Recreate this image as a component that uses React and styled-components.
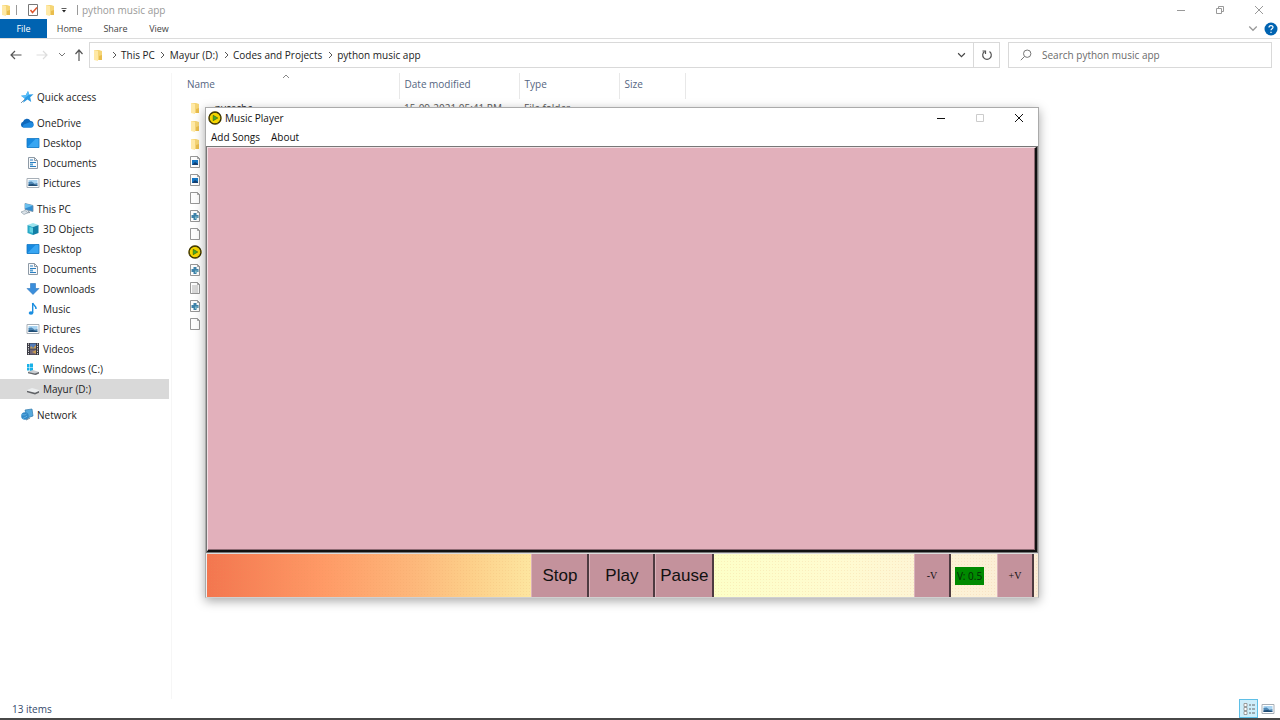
import React from "react";
import styled, { createGlobalStyle } from "styled-components";

const GlobalStyle = createGlobalStyle`
  * { box-sizing: border-box; }
  body {
    margin: 0;
    background: #fff;
    color: #222;
    font: 10px/20px "Open Sans", "Noto Sans", sans-serif;
  }
  button, input { font: inherit; color: inherit; }
  button { border: 0; padding: 0; background: none; }
  svg { display: block; flex: none; }
`;

const Page = styled.div`
  position: relative;
  display: flex;
  flex-direction: column;
  min-height: 100vh;
  border-bottom: 2px solid #484848;
`;

/* Title bar and ribbon */
const TitleBar = styled.header`
  display: flex;
  align-items: center;
  height: 19px;
  padding-right: 2px;
  color: #999;
`;
const QuickTools = styled.div`
  display: flex;
  align-items: center;
  flex: 1;
`;
const ToolButton = styled.button`
  display: flex;
  align-items: center;
  justify-content: center;
  width: ${(p) => p.$w || 16}px;
  height: 18px;
`;
const Rule = styled.span`
  width: 1px;
  height: 10px;
  margin: 0 4px;
  background: #999;
`;
const CaptionButtons = styled.div`
  display: flex;
`;
const CaptionButton = styled.button`
  display: flex;
  align-items: center;
  justify-content: center;
  width: 39px;
  height: 19px;
  color: ${(p) => p.$color || "#999"};
`;
const Ribbon = styled.nav`
  display: flex;
  align-items: center;
  height: 20px;
  padding-right: 2px;
  border-bottom: 1px solid #dcdcdc;
  font-size: 9px;
`;
const RibbonTab = styled.button`
  width: ${(p) => p.$w}px;
  height: 19px;
  line-height: 19px;
  color: ${(p) => (p.$active ? "#fff" : "#444")};
  background: ${(p) => (p.$active ? "#0063b1" : "none")};
`;
const Spacer = styled.span`
  flex: ${(p) => p.$grow || 1};
`;

/* Address bar */
const AddressRow = styled.div`
  display: flex;
  align-items: center;
  height: 34px;
  padding: 3px 8px 5px 4px;
`;
const NavButtons = styled.div`
  display: flex;
  width: 85px;
`;
const AddressBox = styled.div`
  display: flex;
  align-items: center;
  flex: 1;
  height: 26px;
  border: 1px solid #d9d9d9;
  padding-left: 2px;
`;
const Crumbs = styled.div`
  display: flex;
  align-items: center;
  flex: 1;
  padding-left: 2px;
`;
const Crumb = styled.a`
  display: flex;
  align-items: center;
  color: #222;
  text-decoration: none;
`;
const CrumbArrow = styled.span`
  display: flex;
  justify-content: center;
  width: 15px;
`;
const RefreshButton = styled.button`
  display: flex;
  align-items: center;
  justify-content: center;
  width: 26px;
  height: 24px;
  border-left: 1px solid #d9d9d9;
`;
const SearchBox = styled.label`
  display: flex;
  align-items: center;
  gap: 10px;
  width: 264px;
  height: 26px;
  margin-left: 8px;
  padding-left: 11px;
  border: 1px solid #d9d9d9;
`;
const SearchInput = styled.input`
  flex: 1;
  min-width: 0;
  border: 0;
  padding: 0;
  outline: 0;
  background: none;
  &::placeholder { color: #6b6b6b; opacity: 1; }
`;

/* Body */
const Body = styled.main`
  display: flex;
  flex: 1;
`;
const Sidebar = styled.aside`
  display: flex;
  flex-direction: column;
  gap: 6px;
  width: 172px;
  padding: 14px 2px 0 0;
  border-right: 1px solid #f6f6f6;
`;
const NavGroup = styled.div`
  display: flex;
  flex-direction: column;
`;
const NavItem = styled.a`
  display: flex;
  align-items: center;
  gap: 3px;
  height: 20px;
  padding-left: ${(p) => (p.$nested ? 26 : 20)}px;
  color: #222;
  text-decoration: none;
  background: ${(p) => (p.$selected ? "#d9d9d9" : "none")};
`;
const FileArea = styled.section`
  flex: 1;
  padding-left: 10px;
`;
const FileTable = styled.table`
  border-collapse: collapse;
  table-layout: fixed;
  width: 503px;
  text-align: left;
`;
const HeadCell = styled.th`
  position: relative;
  width: ${(p) => p.$w}px;
  height: 26px;
  padding: 0 0 4px 5px;
  border-right: 1px solid #e8e8e8;
  color: #55657f;
  font-weight: 400;
`;
const SortMark = styled.span`
  position: absolute;
  top: 0;
  left: 46%;
`;
const Row = styled.tr`
  height: 18px;
`;
const Cell = styled.td`
  height: 18px;
  padding: 0 0 0 5px;
  line-height: 18px;
  color: #5a5a5a;
`;
const FileName = styled.div`
  display: flex;
  align-items: center;
  gap: 4px;
  color: #222;
`;
const FileIcon = styled.span`
  display: flex;
  justify-content: center;
  width: 15px;
`;
const StatusBar = styled.footer`
  display: flex;
  align-items: center;
  height: 19px;
  padding: 0 3px 0 12px;
  color: #34486b;
`;
const ViewButton = styled.button`
  display: flex;
  align-items: center;
  justify-content: center;
  width: 19px;
  height: 19px;
  border: ${(p) => (p.$active ? "1px solid #5fbfe6" : "0")};
  background: ${(p) => (p.$active ? "#cdeefb" : "none")};
`;

/* Music player window */
const PlayerWindow = styled.section`
  position: absolute;
  top: 107px;
  right: 241px;
  bottom: 120px;
  left: 205px;
  display: flex;
  flex-direction: column;
  border: 1px solid #aaa;
  border-bottom-color: #d0d0d0;
  background: #fff;
  box-shadow: 0 3px 10px rgba(0, 0, 0, 0.35);
`;
const PlayerTitle = styled.header`
  display: flex;
  align-items: center;
  gap: 3px;
  height: 20px;
  padding-left: 2px;
  color: #111;
`;
const MenuBar = styled.nav`
  display: flex;
  gap: 11px;
  height: 18px;
  padding-left: 5px;
`;
const MenuButton = styled.button`
  height: 18px;
  line-height: 18px;
  color: #111;
  font-weight: 500;
`;
const SongList = styled.div`
  flex: 1;
  border-style: solid;
  border-width: 2px 3px 3px 2px;
  border-color: #f3dfe4 #111 #111 #f3dfe4;
  outline: 1px solid #777;
  outline-offset: -1px;
  background: #e2b0bb;
  box-shadow: inset -1px -1px 0 #8d6a73;
`;
const ControlBar = styled.div`
  display: flex;
  height: 44px;
  padding-right: 4px;
  border-top: 1px solid #ddd;
  border-left: 1px solid #eee;
  background:
    radial-gradient(circle, rgba(230, 150, 90, 0.14) 1px, transparent 1px) 0 0 / 3px 3px,
    linear-gradient(90deg, #f3764f 0%, #ff9a66 14%, #fdb87b 25%, #fdd08a 32%, #fde6a0 39%, #fbf8b8 52%, #fdffc8 62%, #fffbd0 76%, #fdf3d6 88%, #fbecd6 100%);
`;
const PlayButton = styled.button`
  width: ${(p) => p.$w}px;
  border-right: 2px solid #4d3a40;
  border-left: 1px solid #dbb2bb;
  background: #c4929c;
  color: #111;
  font: 17px/44px "Liberation Sans", Arial, sans-serif;
`;
const VolumeButton = styled(PlayButton)`
  font: 10px/44px "Liberation Serif", "Times New Roman", serif;
`;
const VolumeBox = styled.div`
  width: 46px;
  padding: 13px 0 0 4px;
`;
const VolumeLabel = styled.output`
  display: block;
  width: 29px;
  height: 18px;
  background: #008a00;
  color: #062b06;
  line-height: 18px;
  text-align: center;
`;

const Svg = ({ w = 14, h = 14, children }) => (
  <svg width={w} height={h} viewBox={`0 0 ${w} ${h}`} fill="none" aria-hidden="true">
    {children}
  </svg>
);

const Folder = () => (
  <Svg w={12} h={14}>
    <path d="M2 2h5l3 1v9H2z" fill="#f5d576" />
    <path d="M2 2l4 1v10l-4-1z" fill="#ffe9a6" />
    <path d="M7 8l3-1v5H7z" fill="#e9bd4d" />
  </Svg>
);
const Chevron = ({ dir = "right", color = "#555", size = 8 }) => {
  const d = { right: "M3 1l3 3-3 3", down: "M1 2l3 3 3-3", up: "M1 5l3-3 3 3" }[dir];
  return (
    <svg width={size} height={size} viewBox="0 0 8 8" fill="none" aria-hidden="true">
      <path d={d} stroke={color} strokeWidth="1" />
    </svg>
  );
};
const Arrow = ({ dir, color = "#555" }) => (
  <Svg w={12} h={12}>
    <path
      d={{ left: "M11.500 6H1M5 2L1 6l4 4", right: "M.5 6H11M7 2l4 4-4 4", up: "M6 12V1M2.500 5L6 1l3.500 4" }[dir]}
      stroke={color}
      strokeWidth="1.2"
    />
  </Svg>
);
const Close = () => (
  <Svg w={10} h={10}><path d="M1 1l8 8M9 1L1 9" stroke="currentColor" /></Svg>
);
const Minimise = () => (
  <Svg w={10} h={10}><path d="M1 5.500h8" stroke="currentColor" /></Svg>
);
const Restore = () => (
  <Svg w={10} h={10}><path d="M1.500 3.500h5v5h-5zM3.500 3.500v-2h5v5h-2" stroke="currentColor" /></Svg>
);
const Maximise = () => (
  <Svg w={10} h={10}><path d="M1.500 1.500h7v7h-7z" stroke="currentColor" /></Svg>
);
const PlayerLogo = () => (
  <Svg>
    <circle cx="7" cy="7" r="6" fill="#f4d500" stroke="#2f2a08" strokeWidth="1.4" />
    <circle cx="7" cy="7" r="6.300" stroke="#b89a00" strokeWidth=".7" strokeDasharray="1.300 2" />
    <path d="M5.200 4.300L9.800 7 5.200 9.700z" fill="#3fae2a" stroke="#3b5d10" strokeWidth=".6" />
  </Svg>
);

const Monitor = () => (
  <Svg>
    <path d="M1 2.500h12v9H1z" fill="#1689e0" />
    <path d="M1 11.500L10 2.500h3v9z" fill="#38a6f2" />
    <path d="M1 2.500h12v9H1z" stroke="#1478c4" strokeWidth=".8" />
  </Svg>
);
const Documents = () => (
  <Svg>
    <path d="M2.500 1.500h6l3 3v8h-9z" fill="#f7f9fb" stroke="#8e9aa6" />
    <path d="M4 4h3M4 6.500h6M4 10.500h6" stroke="#2b7fc0" />
    <path d="M4 7.500h3v2H4z" fill="#5aa3d4" />
    <path d="M8.500 1.500v3h3" stroke="#8e9aa6" />
  </Svg>
);
const Pictures = () => (
  <Svg>
    <path d="M1 2.500h12v9H1z" fill="#fff" stroke="#a7afb7" />
    <path d="M2.500 4h9v3h-9z" fill="#a9d4f2" />
    <path d="M2.500 6l3-.5 3 2 3-.5v3h-9z" fill="#4d86b4" />
    <path d="M2.500 8.500l4-.5 5 1.500v.500h-9z" fill="#1f4c74" />
  </Svg>
);
const NAV_ICONS = {
  star: (
    <Svg>
      <path d="M8 1l1.200 3.600 4.300-.3-3.300 3 1 4.700L7.500 9.500 3 12.800l1.500-4.500L1 5.800l4.700-.6z" fill="#2a9be6" />
      <path d="M8 1l1.200 3.600L4.500 8.300 1 5.800l4.700-.6z" fill="#58bdf7" />
      <path d="M1 13l4-4" stroke="#7b98b0" />
    </Svg>
  ),
  cloud: (
    <Svg>
      <path d="M3 11.500a3 3 0 0 1 0-5.700A4 4 0 0 1 10.500 5 3.300 3.300 0 0 1 11 11.500z" fill="#0f68bb" />
      <path d="M3.500 11.500c-1.500-1.500 0-3 1.500-3.500l4-1.500c3-.8 4.500 1 4.500 2.700s-1 2.300-2.500 2.300z" fill="#1f8ae0" />
    </Svg>
  ),
  monitor: <Monitor />,
  documents: <Documents />,
  pictures: <Pictures />,
  pc: (
    <Svg>
      <path d="M5 1.500l8 2v6l-8-2z" fill="#318fd3" stroke="#6e8ca5" strokeWidth=".8" />
      <path d="M5 1.500l8 2-8 3z" fill="#6bc0ef" />
      <path d="M8 9l2 1.500L5 11" stroke="#8d9aa5" />
      <path d="M1 10l4-1.500 3 2L4 12.500z" fill="#dde4ea" stroke="#91a0ac" strokeWidth=".7" />
    </Svg>
  ),
  cube: (
    <Svg>
      <path d="M1.500 3L7 1l5.500 2L7 5z" fill="#9ce4ee" />
      <path d="M1.500 3L7 5v8l-5.500-2z" fill="#29a9c7" />
      <path d="M12.500 3L7 5v8l5.500-2z" fill="#127fa6" />
      <path d="M3.500 5L7 6v5l-3.500-1z" fill="#63d2e2" />
    </Svg>
  ),
  download: (
    <Svg><path d="M4.500 1.500h5v5H13l-6 6-6-6h3.500z" fill="#3b8edb" stroke="#2d77bd" strokeWidth=".6" /></Svg>
  ),
  music: (
    <Svg>
      <path d="M6.500 1c.5 2.500 4 2.500 3.500 6" stroke="#1b8ee0" strokeWidth="1.500" />
      <path d="M6.700 1v10" stroke="#1b8ee0" strokeWidth="1.400" />
      <ellipse cx="5" cy="11" rx="2.300" ry="1.800" fill="#1b8ee0" />
    </Svg>
  ),
  videos: (
    <Svg>
      <path d="M1 1h12v12H1z" fill="#3a3a43" />
      <path d="M4 1.500h6v5H4z" fill="#527bb8" />
      <path d="M4 7.500h6v5H4z" fill="#74677a" />
      <path d="M5 4l2 2 3-3v3.500H4zM6 10l4-2v4z" fill="#c79a51" />
      <path d="M2.500 1.500v11M11.500 1.500v11" stroke="#e6e6e6" strokeDasharray="1.200 1.200" />
    </Svg>
  ),
  windows: (
    <Svg>
      <path d="M1 2h2.500v3H1zM4 1.500h3V5H4zM1 5.500h2.500v3H1zM4 5.500h3V9H4z" fill="#19b1e8" />
      <path d="M2 9.500l5-1.500 6 2v1.500L10 13l-8-2z" fill="#c9cdd1" />
      <path d="M2 10l7 1.500 4-1.500v1.500L9.500 13 2 11.300z" fill="#66696d" />
    </Svg>
  ),
  drive: (
    <Svg>
      <path d="M1 8l5-2 7 2v2.500l-4 1.500-8-2z" fill="#eceeef" />
      <path d="M1 8.700l8 2 4-1.700v1.800L9 12.500l-8-2.300z" fill="#606266" />
    </Svg>
  ),
  network: (
    <Svg>
      <path d="M5 2l7-1 1 7-6 2z" fill="#56a9dc" stroke="#3178ab" strokeWidth=".7" />
      <circle cx="5" cy="8" r="3.800" fill="#3389c8" />
      <path d="M1.500 7c2-1 3 1 5-1M3 11c0-2 3-1 4-3" stroke="#5fb0e0" />
      <path d="M6 12l4-2" stroke="#66859b" />
    </Svg>
  ),
};

const Sheet = ({ children }) => (
  <Svg w={12} h={14}>
    <path d="M1.500 1.500h7l2 2v9h-9z" fill="#fdfdfd" stroke="#8b8b8b" strokeWidth=".9" />
    <path d="M8.500 1.500v2h2" stroke="#8b8b8b" strokeWidth=".8" />
    {children}
  </Svg>
);
const FILE_ICONS = {
  folder: <Folder />,
  image: (
    <Sheet>
      <path d="M3 5h6v5H3z" fill="#1576c4" />
      <path d="M3 10l3-3 3 2v1z" fill="#123f74" />
    </Sheet>
  ),
  blank: <Sheet />,
  python: (
    <Sheet>
      <path d="M4.500 4h3v2H9.500v3h-2v2h-3V9h-2V6h2z" fill="#3f83aa" />
      <path d="M6 7.500h3v1H7.500V10H6z" fill="#7eb9c9" />
    </Sheet>
  ),
  player: <PlayerLogo />,
  text: (
    <Sheet><path d="M3 5h6M3 7h6M3 9h6M3 11h6" stroke="#aaa" strokeWidth=".9" /></Sheet>
  ),
};

const NAV_GROUPS = [
  [["star", "Quick access"]],
  [["cloud", "OneDrive"], ["monitor", "Desktop"], ["documents", "Documents"], ["pictures", "Pictures"]],
  [
    ["pc", "This PC"], ["cube", "3D Objects"], ["monitor", "Desktop"], ["documents", "Documents"],
    ["download", "Downloads"], ["music", "Music"], ["pictures", "Pictures"], ["videos", "Videos"],
    ["windows", "Windows (C:)"], ["drive", "Mayur (D:)"],
  ],
  [["network", "Network"]],
];
const FILES = [
  { icon: "folder", name: "__pycache__", date: "15-09-2021 05:41 PM", type: "File folder" },
  ...["folder", "folder", "image", "image", "blank", "python", "blank", "player", "python", "text", "python", "blank"].map(
    (icon) => ({ icon })
  ),
];
const CRUMBS = ["This PC", "Mayur (D:)", "Codes and Projects", "python music app"];

export default function App() {
  return (
    <Page>
      <GlobalStyle />
      <TitleBar>
        <QuickTools>
          <Folder />
          <Rule />
          <ToolButton $w={24} aria-label="Properties">
            <Svg w={12} h={12}>
              <path d="M1.500 .500h9v11h-9z" fill="#fff" stroke="#777" />
              <path d="M3.500 6l2 2.500L10 3.500" stroke="#e0572f" strokeWidth="1.500" />
            </Svg>
          </ToolButton>
          <ToolButton $w={10} aria-label="New folder"><Folder /></ToolButton>
          <ToolButton $w={18} aria-label="Customise toolbar">
            <Svg w={6} h={6}><path d="M0.500 1.500h5" stroke="#333" strokeWidth=".8" /><path d="M1 3h4L3 5.500z" fill="#222" /></Svg>
          </ToolButton>
          <Rule />
          python music app
        </QuickTools>
        <CaptionButtons>
          <CaptionButton aria-label="Minimise"><Minimise /></CaptionButton>
          <CaptionButton aria-label="Restore"><Restore /></CaptionButton>
          <CaptionButton aria-label="Close"><Close /></CaptionButton>
        </CaptionButtons>
      </TitleBar>
      <Ribbon>
        <RibbonTab $w={47} $active>File</RibbonTab>
        <RibbonTab $w={45}>Home</RibbonTab>
        <RibbonTab $w={47}>Share</RibbonTab>
        <RibbonTab $w={40}>View</RibbonTab>
        <Spacer />
        <ToolButton $w={22} aria-label="Expand ribbon"><Chevron dir="down" color="#999" size={10} /></ToolButton>
        <ToolButton $w={14} aria-label="Help">
          <Svg>
            <circle cx="7" cy="7" r="6.500" fill="#0063b1" />
            <path d="M5 5.500C5 3 9 3 9 5.300c0 1.500-2 1.500-2 3M7 9.700v1.200" stroke="#fff" strokeWidth="1.200" />
          </Svg>
        </ToolButton>
      </Ribbon>
      <AddressRow>
        <NavButtons>
          <ToolButton $w={24} aria-label="Back"><Arrow dir="left" /></ToolButton>
          <ToolButton $w={27} aria-label="Forward"><Arrow dir="right" color="#ddd" /></ToolButton>
          <ToolButton $w={14} aria-label="Recent"><Chevron dir="down" color="#777" /></ToolButton>
          <ToolButton $w={20} aria-label="Up"><Arrow dir="up" /></ToolButton>
        </NavButtons>
        <AddressBox>
          <Folder />
          <Crumbs>
            {CRUMBS.map((c) => (
              <Crumb key={c} href="#">
                <CrumbArrow><Chevron /></CrumbArrow>
                {c}
              </Crumb>
            ))}
          </Crumbs>
          <ToolButton $w={24} aria-label="Previous locations"><Chevron dir="down" color="#444" size={9} /></ToolButton>
          <RefreshButton aria-label="Refresh">
            <Svg w={12} h={12}>
              <path d="M3.500 2.500a4.300 4.300 0 1 0 5 0" stroke="#555" strokeWidth="1.200" />
              <path d="M1.500 2h3v3" stroke="#555" strokeWidth="1.200" />
            </Svg>
          </RefreshButton>
        </AddressBox>
        <SearchBox>
          <Svg w={12} h={12}>
            <circle cx="7.200" cy="4.700" r="3.700" stroke="#777" />
            <path d="M4.500 7.500L.8 11.200" stroke="#777" />
          </Svg>
          <SearchInput aria-label="Search" placeholder="Search python music app" />
        </SearchBox>
      </AddressRow>
      <Body>
        <Sidebar>
          {NAV_GROUPS.map((group, g) => (
            <NavGroup key={g}>
              {group.map(([icon, label], i) => (
                <NavItem key={label} href="#" $nested={i > 0} $selected={icon === "drive"}>
                  {NAV_ICONS[icon]}
                  {label}
                </NavItem>
              ))}
            </NavGroup>
          ))}
        </Sidebar>
        <FileArea>
          <FileTable>
            <thead>
              <tr>
                <HeadCell $w={217}>Name<SortMark><Chevron dir="up" color="#888" /></SortMark></HeadCell>
                <HeadCell $w={120}>Date modified</HeadCell>
                <HeadCell $w={100}>Type</HeadCell>
                <HeadCell $w={66}>Size</HeadCell>
              </tr>
            </thead>
            <tbody>
              {FILES.map((f, i) => (
                <Row key={i}>
                  <Cell><FileName><FileIcon>{FILE_ICONS[f.icon]}</FileIcon>{f.name}</FileName></Cell>
                  <Cell>{f.date}</Cell>
                  <Cell>{f.type}</Cell>
                  <Cell />
                </Row>
              ))}
            </tbody>
          </FileTable>
        </FileArea>
      </Body>
      <StatusBar>
        13 items
        <Spacer />
        <ViewButton $active aria-label="Details view">
          <Svg>
            <path d="M2 1.500h3v3H2zM2 5.500h3v3H2zM2 9.500h3v3H2z" fill="#fff" stroke="#888" strokeWidth=".8" />
            <path d="M7 3h2M10 3h3M7 7h2M10 7h3M7 11h2M10 11h3" stroke="#666" />
          </Svg>
        </ViewButton>
        <ViewButton aria-label="Large icons"><Pictures /></ViewButton>
      </StatusBar>

      <PlayerWindow>
        <PlayerTitle>
          <PlayerLogo />
          Music Player
          <Spacer />
          <CaptionButtons>
            <CaptionButton $color="#111" aria-label="Minimise player"><Minimise /></CaptionButton>
            <CaptionButton $color="#ccc" aria-label="Maximise player"><Maximise /></CaptionButton>
            <CaptionButton $color="#111" aria-label="Close player"><Close /></CaptionButton>
          </CaptionButtons>
        </PlayerTitle>
        <MenuBar>
          <MenuButton>Add Songs</MenuButton>
          <MenuButton>About</MenuButton>
        </MenuBar>
        <SongList />
        <ControlBar>
          <Spacer $grow={325} />
          <PlayButton $w={58}>Stop</PlayButton>
          <PlayButton $w={66}>Play</PlayButton>
          <PlayButton $w={59}>Pause</PlayButton>
          <Spacer $grow={200} />
          <VolumeButton $w={37}>-V</VolumeButton>
          <VolumeBox><VolumeLabel>V: 0.5</VolumeLabel></VolumeBox>
          <VolumeButton $w={37}>+V</VolumeButton>
        </ControlBar>
      </PlayerWindow>
    </Page>
  );
}
